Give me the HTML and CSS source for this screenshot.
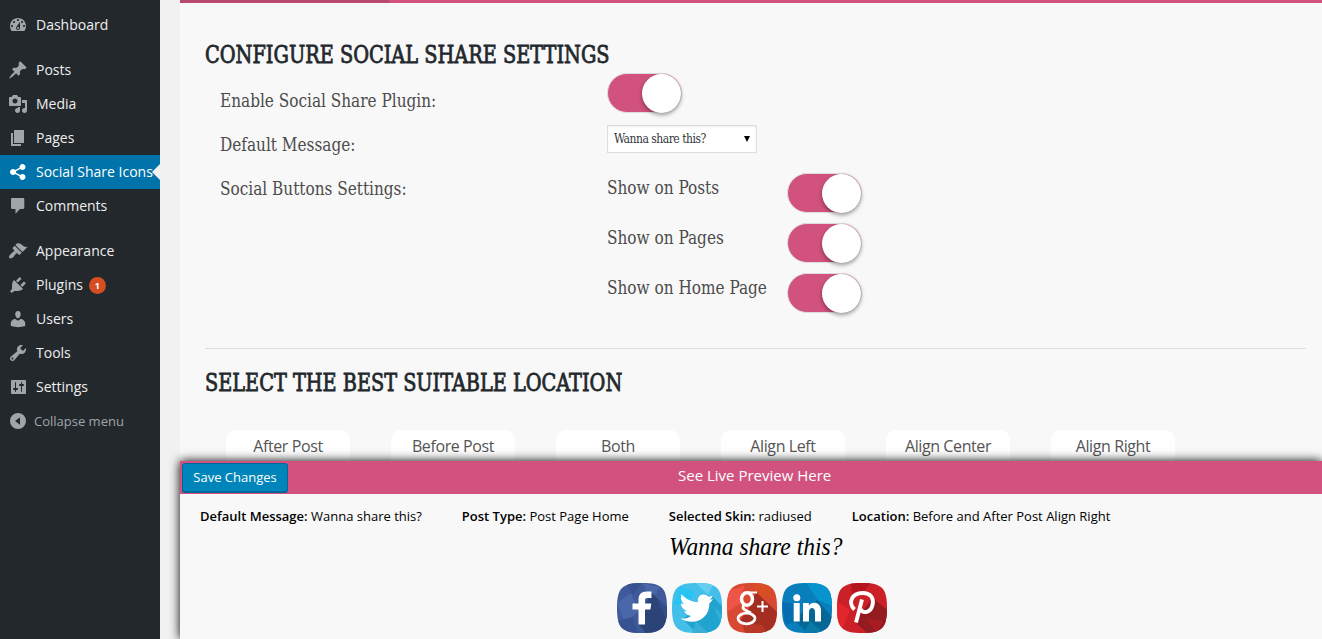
FILE: index.html
```html
<!DOCTYPE html>
<html lang="en">
<head>
<meta charset="utf-8">
<title>Social Share Icons</title>
<link rel="stylesheet" href="styles.css">
</head>
<body>
<div class="app">
  <nav class="sidebar">
    <a class="item"><svg class="ico" viewBox="0 0 20 20"><path d="M3.76 16h12.48c1.1-1.37 1.76-3.11 1.76-5 0-4.42-3.58-8-8-8s-8 3.58-8 8c0 1.89.66 3.63 1.76 5zM10 4c.55 0 1 .45 1 1s-.45 1-1 1-1-.45-1-1 .45-1 1-1zM6 6c.55 0 1 .45 1 1s-.45 1-1 1-1-.45-1-1 .45-1 1-1zm8 0c.55 0 1 .45 1 1s-.45 1-1 1-1-.45-1-1 .45-1 1-1zm-5.37 5.55L12 7v6c0 1.1-.9 2-2 2s-2-.9-2-2c0-.57.24-1.08.63-1.45zM4 10c.55 0 1 .45 1 1s-.45 1-1 1-1-.45-1-1 .45-1 1-1zm12 0c.55 0 1 .45 1 1s-.45 1-1 1-1-.45-1-1 .45-1 1-1zm-5 3c0-.55-.45-1-1-1s-1 .45-1 1 .45 1 1 1 1-.45 1-1z"/></svg><span>Dashboard</span></a>
    <a class="item gap"><svg class="ico" viewBox="0 0 20 20"><path d="M10.44 3.02l1.82-1.82 6.36 6.35-1.83 1.82c-1.05-.68-2.48-.57-3.41.36l-.75.75c-.92.93-1.04 2.35-.35 3.41l-1.83 1.82-2.41-2.41-2.8 2.79c-.42.42-3.38 2.71-3.8 2.29s1.86-3.39 2.28-3.81l2.79-2.79L4.1 9.36l1.83-1.82c1.05.69 2.48.57 3.4-.36l.75-.75c.93-.92 1.05-2.35.36-3.41z"/></svg><span>Posts</span></a>
    <a class="item"><svg class="ico" viewBox="0 0 20 20"><path d="M13 11V4c0-.55-.45-1-1-1h-1.67L9 1H5L3.67 3H2c-.55 0-1 .45-1 1v7c0 .55.45 1 1 1h10c.55 0 1-.45 1-1zM7 4.5c1.38 0 2.5 1.12 2.5 2.5S8.38 9.5 7 9.5 4.5 8.38 4.5 7 5.62 4.5 7 4.5zM14 6h5v10.5c0 1.38-1.12 2.5-2.5 2.5S14 17.88 14 16.5s1.12-2.5 2.5-2.5c.17 0 .34.02.5.05V9h-3V6zm-4 8.05V13h2v3.5c0 1.38-1.12 2.5-2.5 2.5S7 17.88 7 16.5 8.12 14 9.5 14c.17 0 .34.02.5.05z"/></svg><span>Media</span></a>
    <a class="item"><svg class="ico" viewBox="0 0 20 20"><path d="M6 15V2h10v13H6zm-1 1h8v2H3V5h2v11z"/></svg><span>Pages</span></a>
    <a class="item current"><svg class="ico" viewBox="0 0 20 20"><path d="M14.5 12c1.66 0 3 1.34 3 3s-1.34 3-3 3-3-1.34-3-3c0-.24.03-.46.09-.69l-4.38-2.3c-.55.61-1.33.99-2.21.99-1.66 0-3-1.34-3-3s1.34-3 3-3c.88 0 1.66.39 2.21.99l4.38-2.3c-.06-.23-.09-.45-.09-.69 0-1.66 1.34-3 3-3s3 1.34 3 3-1.34 3-3 3c-.88 0-1.66-.39-2.21-.99l-4.38 2.3c.06.23.09.45.09.69s-.03.46-.09.69l4.38 2.3c.55-.61 1.33-.99 2.21-.99z"/></svg><span>Social Share Icons</span></a>
    <a class="item"><svg class="ico" viewBox="0 0 20 20"><path d="M4 2h11c.6 0 1.3.5 1.3 1.200v8.600c0 .7-.6 1.200-1.300 1.200h-3l-4.500 4.800V13H4.200C3.500 13 3 12.500 3 11.800V3.200C3 2.500 3.500 2 4 2z"/></svg><span>Comments</span></a>
    <a class="item gap"><svg class="ico" viewBox="0 0 20 20"><path d="M14.48 11.06L7.41 3.99l1.5-1.5c.5-.56 2.3-.47 3.51.32 1.21.8 1.43 1.28 2.91 2.1 1.18.64 2.45 1.26 4.45.85zm-.71.71L6.7 4.7 4.93 6.47c-.39.39-.39 1.02 0 1.41l1.06 1.06c.39.39.39 1.03 0 1.42-.6.6-1.43 1.11-2.21 1.69-.35.26-.7.53-1.01.84C1.43 14.23.4 16.08 1.4 17.07c.99 1 2.84-.03 4.18-1.36.31-.31.58-.66.85-1.02.57-.78 1.08-1.61 1.69-2.21.39-.39 1.02-.39 1.41 0l1.06 1.06c.39.39 1.02.39 1.41 0z"/></svg><span>Appearance</span></a>
    <a class="item"><svg class="ico" viewBox="0 0 20 20"><path d="M13.11 4.36L9.87 7.6 8 5.73l3.24-3.24c.35-.34 1.05-.2 1.56.32.52.51.66 1.21.31 1.55zm-8 1.77l.91-1.12 9.01 9.01-1.19.84c-.71.71-2.63 1.16-3.82 1.16H6.14L4.9 17.26c-.59.59-1.54.59-2.12 0-.59-.58-.59-1.53 0-2.12l1.24-1.24v-3.88c0-1.13.4-3.19 1.09-3.89zm7.26 3.97l3.24-3.24c.34-.35 1.04-.21 1.55.31.52.51.66 1.21.31 1.55l-3.24 3.25z"/></svg><span>Plugins</span><b class="count">1</b></a>
    <a class="item"><svg class="ico" viewBox="0 0 20 20"><path d="M10 9.25c-2.27 0-2.73-3.44-2.73-3.44C7 4.02 7.82 2 9.97 2c2.16 0 2.98 2.02 2.71 3.81 0 0-.41 3.44-2.68 3.44zm0 2.57L12.72 10c2.39 0 4.52 2.33 4.52 4.53v2.49s-3.65 1.13-7.24 1.13c-3.65 0-7.24-1.13-7.24-1.13v-2.49c0-2.25 1.94-4.48 4.47-4.48z"/></svg><span>Users</span></a>
    <a class="item"><svg class="ico" viewBox="0 0 20 20"><path d="M16.68 9.77c-1.34 1.34-3.3 1.67-4.95.99l-5.41 6.52c-.99.99-2.59.99-3.58 0s-.99-2.59 0-3.57l6.52-5.42c-.68-1.65-.35-3.61.99-4.95 1.28-1.28 3.12-1.62 4.72-1.06l-2.89 2.89 2.82 2.82 2.86-2.87c.53 1.58.18 3.39-1.08 4.65zM3.81 16.21c.4.39 1.04.39 1.43 0 .4-.4.4-1.04 0-1.43-.39-.4-1.03-.4-1.43 0-.39.39-.39 1.03 0 1.43z"/></svg><span>Tools</span></a>
    <a class="item"><svg class="ico" viewBox="0 0 20 20"><path d="M18 16V4c0-.55-.45-1-1-1H4c-.55 0-1 .45-1 1v12c0 .55.45 1 1 1h13c.55 0 1-.45 1-1zM8 11h1c.55 0 1 .45 1 1s-.45 1-1 1H8v1.500c0 .28-.22.5-.5.5s-.5-.22-.5-.5V13H6c-.55 0-1-.45-1-1s.45-1 1-1h1V5.500c0-.28.22-.5.5-.5s.5.22.5.5V11zm5-2h-1c-.55 0-1-.45-1-1s.45-1 1-1h1V5.500c0-.28.22-.5.5-.5s.5.22.5.5V7h1c.55 0 1 .45 1 1s-.45 1-1 1h-1v5.500c0 .28-.22.5-.5.5s-.5-.22-.5-.5V9z"/></svg><span>Settings</span></a>
    <a class="item collapse"><svg class="ico" viewBox="0 0 20 20"><path fill-rule="evenodd" d="M10 2a8 8 0 1 1 0 16a8 8 0 1 1 0-16zM12 6.200L7 10l5 3.800z"/></svg><span>Collapse menu</span></a>
  </nav>

  <main class="panel">
    <div class="tabline"><div class="tab-active"></div></div>
    <section class="configure">
      <h2 class="title"><span class="t1">CONFIGURE SOCIAL SHARE SETTINGS</span></h2>
      <div class="grid">
        <div class="labels">
          <div class="label"><span>Enable Social Share Plugin:</span></div>
          <div class="label"><span>Default Message:</span></div>
          <div class="label"><span>Social Buttons Settings:</span></div>
        </div>
        <div class="controls">
          <div class="switch"><i></i></div>
          <div class="select"><span>Wanna share this?</span><svg width="6" height="6" viewBox="0 0 6 6"><path d="M0 0h6L3 6z"/></svg></div>
          <div class="row"><div class="label"><span>Show on Posts</span></div><div class="switch"><i></i></div></div>
          <div class="row"><div class="label"><span>Show on Pages</span></div><div class="switch"><i></i></div></div>
          <div class="row"><div class="label"><span>Show on Home Page</span></div><div class="switch"><i></i></div></div>
        </div>
      </div>
    </section>
    <section class="location">
      <h2 class="title"><span class="t2">SELECT THE BEST SUITABLE LOCATION</span></h2>
      <div class="options">
        <div class="option">After Post</div><div class="option">Before Post</div><div class="option">Both</div><div class="option">Align Left</div><div class="option">Align Center</div><div class="option">Align Right</div>
      </div>
    </section>
  </main>

  <aside class="preview">
    <header class="bar"><button class="save">Save Changes</button><span class="live">See Live Preview Here</span></header>
    <div class="summary">
      <span><b>Default Message:</b> Wanna share this?</span>
      <span><b>Post Type:</b> Post Page Home</span>
      <span><b>Selected Skin:</b> radiused</span>
      <span><b>Location:</b> Before and After Post Align Right</span>
    </div>
    <div class="message"><span>Wanna share this?</span></div>
    <div class="social">
      <svg viewBox="0 0 50 50"><defs><clipPath id="r"><path d="M25 0C45 0 50 5 50 25S45 50 25 50 0 45 0 25 5 0 25 0z"/></clipPath></defs><g clip-path="url(#r)"><path fill="#3e5a9b" d="M0 0h50v50H0z"/><path fill="#4a67a8" d="M0 20l14-10 8 18L8 40zM25 0l18 4-8 12z"/><path fill="#38528f" d="M10 0h14l-8 12zM0 38l16-4 5 16H0z"/><path fill="#2c4378" d="M34 9l16 16v25H29l-8-9z"/><path fill="#344d86" d="M40 16l10 8v14z"/></g><path fill="#fff" d="M34.500 8.500v6.500h-4c-2 0-2.500.8-2.500 2.500V20.500h6.300l-.9 6H28v15h-6.500v-15h-6v-6h6V17c0-5.800 3-8.500 8-8.500z"/></svg>
      <svg viewBox="0 0 50 50"><g clip-path="url(#r)"><path fill="#43bfe9" d="M0 0h50v50H0z"/><path fill="#27c3f3" d="M8 3l14 6-4 10L2 22z"/><path fill="#62cdee" d="M24 0h18l-6 12z"/><path fill="#20a4cf" d="M40 13l10 10v27H24L11 36z"/><path fill="#38afd6" d="M24 38l12 12H20zM42 24l8 8v10z"/></g><path fill="#fff" transform="translate(-1 -.5)" d="M42 16.500c-1.200.6-2.200.7-3.300.7 1.200-.8 2.500-2.300 3-4.200-1.600 1-3 1.300-4.300 1.300-5-5-12-1-10.300 5.500-6.600-.5-12.900-3.500-16.500-8 -1.500 3.500-.3 7.500 2.600 10-1 0-2-.3-3.300-1 0 3.700 2.800 6.800 6.500 7.700-1 .3-2 .3-3.200.1.900 2.700 3.500 4.500 6.700 4.800-3 2.500-6.200 3-10.400 2.600 13.500 8 29.100.7 28.900-15.300 1.400-1 2.500-2.400 3.600-4.200z"/></svg>
      <svg viewBox="0 0 50 50"><g clip-path="url(#r)"><path fill="#d84932" d="M0 0h50v50H0z"/><path fill="#ef5547" d="M0 8L17 3l-4 18L0 29z"/><path fill="#d94f25" d="M24 0h17l5 15-11-1z"/><path fill="#a52e22" d="M29 9l21 20v21H28L13 38l9-13z"/><path fill="#b93826" d="M15 40l20 2 5 8H18z"/></g><g fill="none" stroke="#fff"><ellipse cx="20" cy="16" rx="5.500" ry="6.300" stroke-width="3.500"/><path stroke-width="2" d="M20 9.500h10"/><path stroke-width="3" d="M17 22c-2 2-1 4 2 5.500l5 2.500"/><ellipse cx="19.500" cy="35.500" rx="8.500" ry="5.300" stroke-width="2.700"/><path stroke-width="2" d="M35.500 18v11M30 23.500h11"/></g></svg>
      <svg viewBox="0 0 50 50"><g clip-path="url(#r)"><path fill="#087fbb" d="M0 0h50v50H0z"/><path fill="#0794cd" d="M24 0h26v23L36 17z"/><path fill="#046eb1" d="M0 19l14 2 3 17-14 4z"/><path fill="#066696" d="M35 17l15 17v16H26l-14-13z"/><path fill="#0879a9" d="M28 38l14 12H22z"/></g><g fill="#fff"><circle cx="14.800" cy="14.800" r="3.500"/><path d="M11.700 20h6v18.500h-6zM21 20h5.800v2.600c3.500-5 12.200-3.500 12.200 5v10.900h-6V29c0-5.500-6-5.300-6 0v9.500h-6z"/></g></svg>
      <svg viewBox="0 0 50 50"><g clip-path="url(#r)"><path fill="#cb2027" d="M0 0h50v50H0z"/><path fill="#b5161e" d="M14 0h20l-8 9-11 5z"/><path fill="#e4262c" d="M0 19l13 8-7 18-6-5z"/><path fill="#941b20" d="M36 15l14 12v23H30L17 38z"/><path fill="#a71d22" d="M30 36l16 2-6 12z"/></g><path fill="none" stroke="#fff" stroke-width="3.900" d="M17.500 26.500c-7-7-2.500-16.500 8-16.500 9 0 11.500 6 10 12-2 8-9.500 9-12 4M25 16.500l-6 23"/></svg>
    </div>
  </aside>
</div>
</body>
</html>
```
FILE: styles.css
```css
* { box-sizing: border-box; }
body { margin: 0; background: #f1f1f1; font-family: "Open Sans", sans-serif; color: #444; }
.app { position: relative; display: flex; width: 1322px; height: 639px; overflow: hidden; }
.sidebar { width: 160px; background: #23282d; padding-top: 8px; z-index: 3; }
.item { position: relative; display: flex; align-items: center; height: 34px; padding-left: 8px; font-size: 14px; color: #eee; white-space: nowrap; }
.item span { padding-bottom: 2px; }
.gap { margin-top: 11px; }
.ico { width: 20px; height: 20px; margin-right: 8px; flex: none; fill: #a0a5aa; }
.current { background: #0073aa; color: #fff; }
.current .ico { fill: #fff; }
.current::after { content: ""; position: absolute; right: 0; top: 9px; border: 8px solid transparent; border-left: 0; border-right-color: #f1f1f1; }
.count { width: 17px; height: 17px; margin-left: 6px; border-radius: 50%; background: #d54e21; color: #fff; font-size: 9px; line-height: 17px; text-align: center; }
.collapse { font-size: 13px; color: #a0a5aa; }
.collapse span { padding-bottom: 0; }
.collapse .ico { margin-right: 6px; }

.panel { flex: 1; margin-left: 20px; background: #f8f8f8; }
.tabline { height: 3px; background: #d2527f; }
.tab-active { width: 209px; height: 3px; background: #b84a70; }
.title { margin: 0; height: 34px; font: 400 25px/34px "DejaVu Serif Condensed", "DejaVu Serif", serif; color: #23282d; white-space: nowrap; -webkit-text-stroke: .8px #23282d; }
.title span { display: inline-block; transform-origin: 0 50%; }
.t1 { transform: scaleX(.858); }
.t2 { transform: scaleX(.857); }
.configure { height: 346px; margin: 0 16px 0 25px; padding-top: 35px; border-bottom: 1px solid #ddd; }
.grid { display: flex; }
.labels { width: 402px; padding: 7px 0 0 15px; }
.label { font: 18px/43px "DejaVu Serif Condensed", "DejaVu Serif", serif; height: 44px; color: #4c4c4c; white-space: nowrap; }
.label span { display: inline-block; transform: scaleX(.945); transform-origin: 0 50%; }
.controls { padding-top: 1px; }
.switch { width: 75px; height: 40px; border-radius: 20px; background: #d2527f; border: 1px solid #ddd; display: flex; justify-content: flex-end; }
.switch i { width: 39px; height: 39px; margin: 0; border-radius: 50%; background: #fff; box-shadow: 0 2px 4px rgba(0,0,0,.4); }
.select { display: flex; align-items: center; justify-content: space-between; width: 150px; height: 28px; margin: 12px 0 15px; padding: 0 6px; border: 1px solid #ddd; background: #fff; box-shadow: inset 0 1px 2px rgba(0,0,0,.07); font: 12px "DejaVu Serif Condensed", "DejaVu Serif", serif; letter-spacing: -.5px; color: #32373c; }
.row { display: flex; height: 50px; padding-top: 5px; }
.row .label { width: 180px; line-height: 29px; }
.location { padding: 17px 0 0 25px; }
.options { display: flex; gap: 41px; padding: 30px 0 0 21px; }
.option { width: 124px; height: 124px; border-radius: 10px; background: #fff; font-size: 16px; letter-spacing: -.4px; line-height: 32px; text-align: center; color: #555; }

.preview { position: absolute; left: 180px; top: 461px; width: 1142px; height: 178px; background: #f8f8f8; box-shadow: 0 0 10px #000; z-index: 2; color: #000; }
.bar { display: flex; align-items: center; height: 33px; padding-left: 2px; background: #d2527f; }
.save { width: 106px; height: 29px; padding: 0 0 2px; border: 1px solid #006799; border-radius: 3px; background: #0085ba; box-shadow: 0 1px 0 #006799; color: #fff; font: 13px "Open Sans", sans-serif; }
.live { margin: -5px 0 0 390px; font-size: 15px; color: #fff; white-space: nowrap; }
.summary { display: flex; gap: 40px; padding: 12px 0 0 20px; font-size: 13px; line-height: 20px; white-space: nowrap; }
.summary b { font-weight: 600; }
.message { height: 48px; padding-left: 489px; font: italic 26px/42px "Liberation Serif", serif; white-space: nowrap; }
.message span { display: inline-block; transform: scaleX(.905); transform-origin: 0 50%; }
.social { display: flex; gap: 5px; padding: 9px 0 0 437px; }
.social svg { width: 50px; height: 50px; }
```
